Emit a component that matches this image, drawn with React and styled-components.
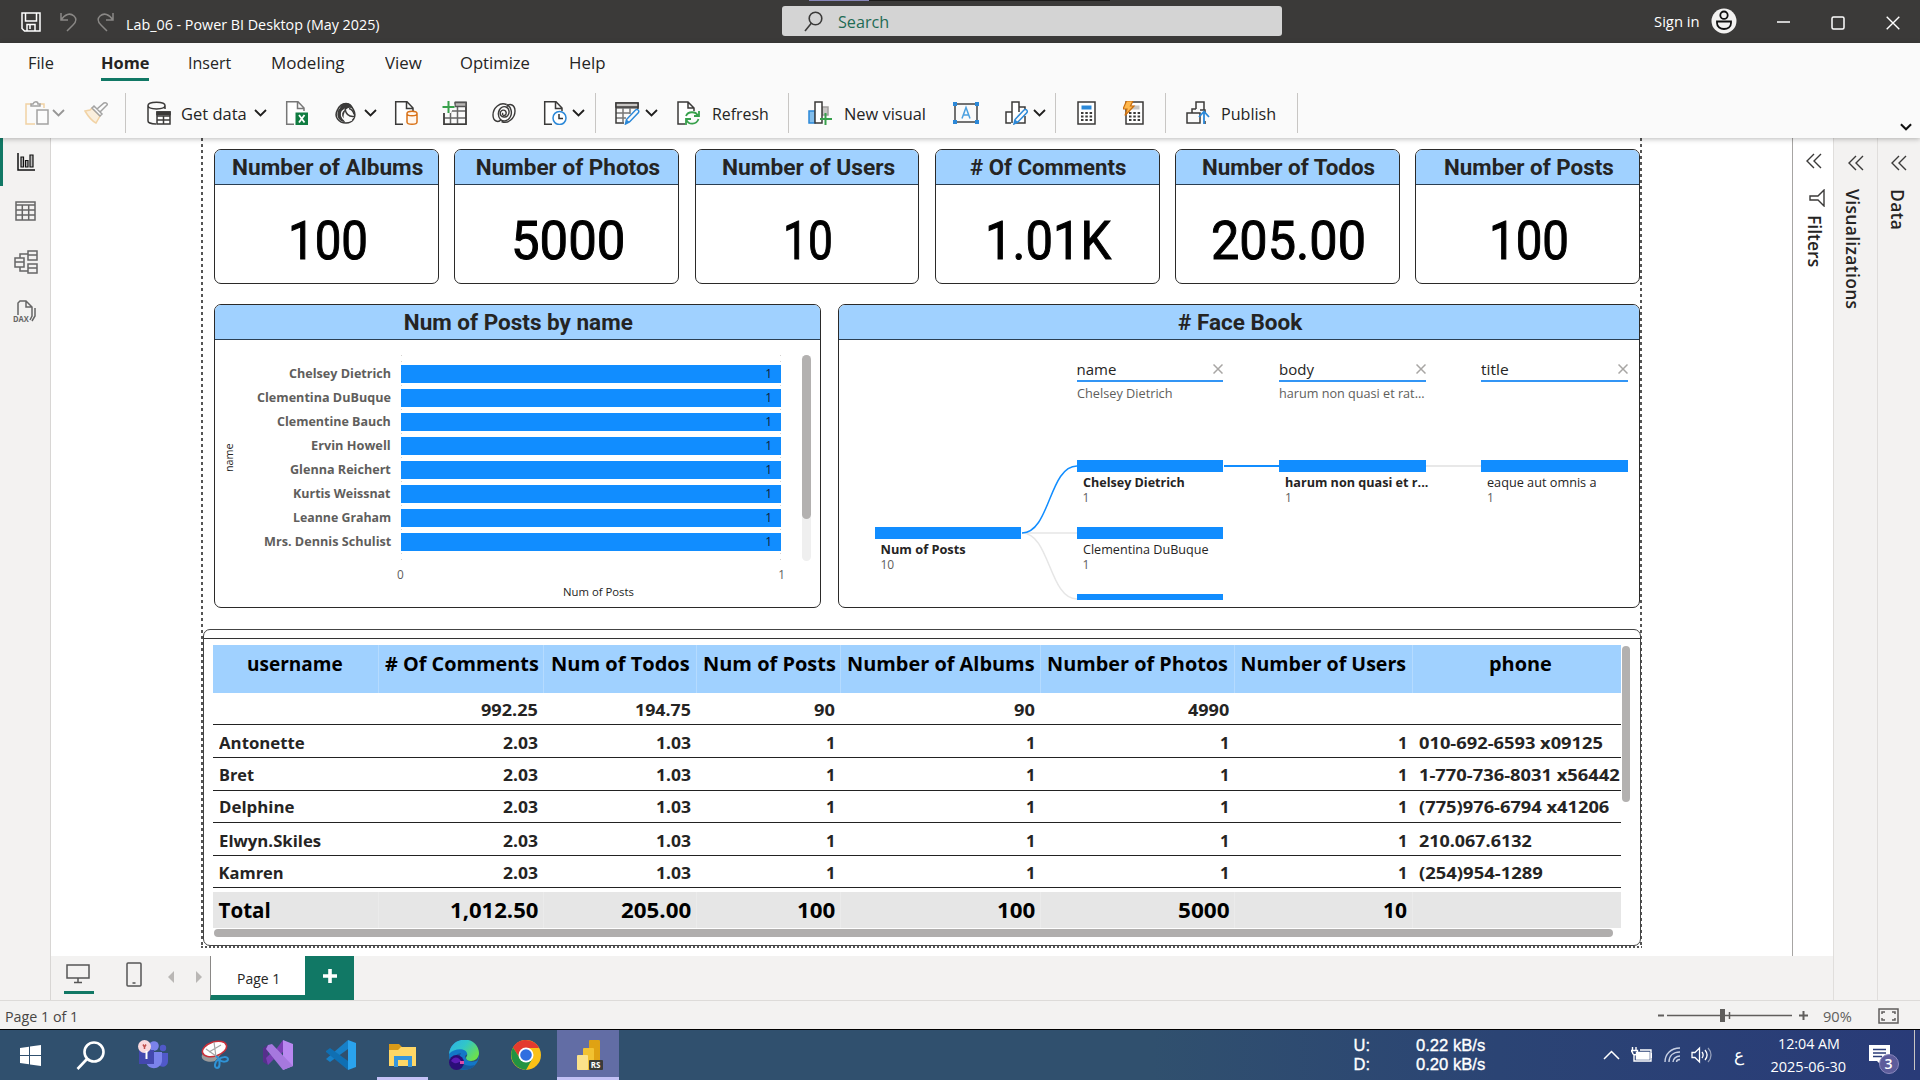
import React, { useLayoutEffect, useRef, useState } from "react";
import styled, { createGlobalStyle, css } from "styled-components";

const ui = '"Open Sans", "Noto Sans", sans-serif';
const din = 'Roboto, "Liberation Sans", sans-serif';
const blue = "#118dff";
const green = "#117865";

const Global = createGlobalStyle`
  *, *::before, *::after { box-sizing: border-box; }
  html, body { margin: 0; background: #fff; }
  body { font-family: ${ui}; color: #252423; overflow: hidden; }
  svg { display: block; flex: none; }
`;

/* ---------- text that keeps a fixed advance width ---------- */
const FitBox = styled.span`
  display: inline-block;
  flex: none;
  white-space: nowrap;
  text-align: left;
`;
const FitInner = styled.span`
  display: inline-block;
  transform-origin: 0 50%;
`;
function Fit({ w, children }) {
  const ref = useRef(null);
  const [scale, setScale] = useState(1);
  useLayoutEffect(() => {
    setScale(w / ref.current.offsetWidth);
  }, [w, children]);
  return (
    <FitBox style={{ width: w }}>
      <FitInner ref={ref} style={{ transform: `scaleX(${scale})` }}>{children}</FitInner>
    </FitBox>
  );
}

/* ---------- shell ---------- */
const Screen = styled.div`
  width: 1920px;
  height: 1080px;
  display: flex;
  flex-direction: column;
  background: #fff;
  overflow: hidden;
`;

const TitleBar = styled.header`
  height: 43px;
  flex: none;
  display: flex;
  align-items: flex-start;
  background: #3b3a39;
  color: #fff;
`;
const Slot = styled.div`
  flex: none;
  margin-left: ${(p) => p.$gap || 0}px;
  margin-top: ${(p) => p.$top || 0}px;
  width: ${(p) => (p.$w ? p.$w + "px" : "auto")};
`;
const TitleText = styled.div`
  margin: 13px 0 0 12px;
  width: 256px;
  flex: none;
  font-size: 14.6px;
  line-height: 22px;
`;
const SearchArea = styled.div`
  margin-left: 400px;
  width: 500px;
`;
const TopEdge = styled.div`
  height: 1px;
  margin: 0 172px 5px 27px;
  background: linear-gradient(90deg, #8785b8 0 60px, #1c1b1a 60px);
`;
const SearchBox = styled.div`
  height: 30px;
  display: flex;
  align-items: center;
  padding-left: 22px;
  gap: 15px;
  border-radius: 3px;
  background: #d4d4d4;
  color: #1f6b54;
  font-size: 16.5px;
`;
const SignIn = styled.div`
  margin: 11px 0 0 371.5px;
  width: 46px;
  font-size: 14.5px;
  line-height: 22px;
`;

const Ribbon = styled.section`
  height: 95px;
  flex: none;
  background: #fafafa;
  position: relative;
  z-index: 2;
  box-shadow: 0 1px 5px rgba(0, 0, 0, 0.28);
`;
const Tabs = styled.nav`
  display: flex;
  height: 38px;
  padding-left: 28px;
`;
const Tab = styled.div`
  margin-left: ${(p) => p.$gap}px;
  padding-top: 7px;
  font-size: 16.4px;
  line-height: 25px;
  font-weight: ${(p) => (p.$active ? 700 : 400)};
  border-bottom: 3px solid ${(p) => (p.$active ? green : "transparent")};
`;
const Tools = styled.div`
  display: flex;
  align-items: center;
  height: 40px;
  margin-top: 12px;
  font-size: 17px;
`;
const Tool = styled.div`
  margin-left: ${(p) => p.$gap}px;
  width: ${(p) => p.$w}px;
  flex: none;
  display: flex;
  opacity: ${(p) => (p.$dim ? 0.45 : 1)};
`;
const Rule = styled.div`
  margin-left: ${(p) => p.$gap}px;
  width: 1px;
  height: 40px;
  flex: none;
  background: #c8c6c4;
`;
const Collapse = styled.div`
  margin: 28px 0 0 602.5px;
`;

const Work = styled.main`
  flex: none;
  height: 862px;
  display: flex;
`;
const Rail = styled.aside`
  width: 51px;
  flex: none;
  background: #f3f2f1;
  border-right: 1px solid #d8d6d4;
`;
const RailItem = styled.div`
  height: ${(p) => p.$h || 51}px;
  display: flex;
  align-items: center;
  padding-left: ${(p) => p.$pad}px;
  ${(p) => p.$active && css`border-left: 3px solid ${green};`}
`;
const DaxIcon = styled.div`
  width: 26px;
  height: 26px;
  position: relative;
`;
const DaxText = styled.span`
  position: absolute;
  left: 0;
  bottom: 2px;
  font-size: 8px;
  line-height: 8px;
  font-weight: 700;
  color: #666;
  background: #f3f2f1;
`;

const Center = styled.div`
  flex: none;
  width: 1782px;
  display: flex;
  flex-direction: column;
`;
const CanvasRow = styled.div`
  height: 818px;
  display: flex;
`;
const Canvas = styled.div`
  width: 1742px;
  flex: none;
  padding-left: 150px;
  border-right: 1px solid #a7a5a3;
`;
const ReportPage = styled.div`
  width: 1441px;
  height: 810px;
  padding-top: 11px;
  background:
    repeating-linear-gradient(180deg, #555 0 3px, transparent 3px 6px) 0 0 / 2px 100% no-repeat,
    repeating-linear-gradient(180deg, #555 0 3px, transparent 3px 6px) 100% 0 / 2px 100% no-repeat,
    repeating-linear-gradient(90deg, #555 0 2px, transparent 2px 4px) 0 100% / 100% 2px no-repeat;
`;
const SidePanel = styled.aside`
  width: ${(p) => p.$w}px;
  flex: none;
  padding: ${(p) => p.$top}px 0 0 ${(p) => p.$pad}px;
  background: ${(p) => (p.$plain ? "#fff" : "#f3f2f1")};
  border-left: ${(p) => (p.$plain ? "0" : "1px solid #e0dedc")};
`;
const VerticalLabel = styled.div`
  margin: ${(p) => p.$gap}px 0 0 ${(p) => p.$left || -4}px;
  writing-mode: vertical-rl;
  font-size: 17.5px;
  line-height: 24px;
  font-weight: 600;
  letter-spacing: ${(p) => p.$ls || 0}px;
  white-space: nowrap;
`;

/* ---------- visuals ---------- */
const Cards = styled.div`
  display: flex;
  gap: 15.5px;
  padding-left: 13.3px;
`;
const Frame = styled.section`
  width: ${(p) => p.$w}px;
  height: ${(p) => p.$h}px;
  flex: none;
  border: 1.4px solid #2b2a29;
  border-radius: 7px;
  overflow: hidden;
  background: #fff;
`;
const FrameTitle = styled.h2`
  margin: 0;
  height: 35px;
  display: flex;
  justify-content: center;
  padding-left: 2px;
  background: #a0d1ff;
  border-bottom: 1px solid #2b3f52;
  font: 700 22.5px/34px ${din};
  color: #252423;
`;
const CardValue = styled.div`
  display: flex;
  justify-content: center;
  padding: 23px 0 0 2px;
  font: 400 54px/66px ${din};
  -webkit-text-stroke: 1px #000;
  color: #000;
`;
const Charts = styled.div`
  display: flex;
  gap: 17.5px;
  padding: 20px 0 0 13px;
`;

const BarBody = styled.div`
  display: flex;
  height: 268px;
`;
const YTitle = styled.div`
  width: 16px;
  margin: 101px 0 0 6px;
  writing-mode: vertical-rl;
  transform: rotate(180deg);
  height: 31px;
  font-size: 10.8px;
  line-height: 16px;
`;
const BarNames = styled.div`
  width: 151px;
  margin: 22px 10px 0 3px;
  display: flex;
  flex-direction: column;
  align-items: flex-end;
  font-size: 12.6px;
  line-height: 24px;
  font-weight: 700;
  color: #605e5c;
`;
const Plot = styled.div`
  width: 380px;
`;
const Bars = styled.div`
  height: 205px;
  margin-top: 15px;
  padding-top: 10px;
  display: flex;
  flex-direction: column;
  gap: 6px;
  background:
    repeating-linear-gradient(180deg, #d5d3d1 0 1px, transparent 1px 6px) 0 0 / 1px 100% no-repeat,
    repeating-linear-gradient(180deg, #d5d3d1 0 1px, transparent 1px 6px) 100% 0 / 1px 100% no-repeat;
`;
const Bar = styled.div`
  height: 18px;
  flex: none;
  padding-right: 9px;
  text-align: right;
  background: ${blue};
  font-size: 12px;
  line-height: 18px;
  color: #10203a;
`;
const Axis = styled.div`
  display: flex;
  justify-content: space-between;
  margin: 5px -4px 0;
  font-size: 11.8px;
  line-height: 18px;
  color: #605e5c;
`;
const XTitle = styled.div`
  text-align: center;
  padding-left: 15px;
  font-size: 11px;
  line-height: 18px;
`;
const Track = styled.div`
  width: 9px;
  height: 206px;
  margin: 15px 0 0 21px;
  border-radius: 5px;
  background: #efefef;
`;
const Thumb = styled.div`
  height: 164px;
  border-radius: 5px;
  background: #b3b1b0;
`;

const TreeBody = styled.div`
  position: relative;
  height: 268px;
`;
const Links = styled.svg`
  position: absolute;
  left: 0.5px;
  top: 0.5px;
`;
const Level = styled.div`
  position: absolute;
  left: ${(p) => p.$x}px;
  top: 17.5px;
  width: 146.5px;
`;
const LevelHead = styled.div`
  display: flex;
  justify-content: space-between;
  align-items: center;
  height: 24px;
  border-bottom: 2.5px solid #3295f5;
  font-size: 15px;
  line-height: 20px;
`;
const LevelValue = styled.div`
  padding-top: 3px;
  font-size: 12.6px;
  line-height: 18px;
  color: #605e5c;
`;
const Node = styled.div`
  position: absolute;
  left: ${(p) => p.$x}px;
  top: ${(p) => p.$y}px;
  width: 146.5px;
`;
const NodeBar = styled.div`
  height: ${(p) => p.$h || 12}px;
  background: ${blue};
`;
const NodeName = styled.div`
  padding: 1.5px 0 0 6px;
  font-size: 12.8px;
  line-height: 18px;
  font-weight: ${(p) => (p.$bold ? 700 : 400)};
  white-space: nowrap;
`;
const NodeCount = styled.div`
  padding-left: 6px;
  font-size: 12px;
  line-height: 13px;
  color: #605e5c;
`;

const TableFrame = styled.section`
  width: 1438px;
  height: 317px;
  margin: 21px 0 0 1.5px;
  border: 1.4px solid #444;
  border-radius: 7px;
  background: #fff;
`;
const TableGap = styled.div`
  height: 9px;
  border-bottom: 1.4px solid #333;
`;
const TableArea = styled.div`
  display: flex;
  padding: 5.5px 0 0 9px;
`;
const Grid = styled.div`
  width: 1408px;
  overflow: hidden;
`;
const GridRow = styled.div`
  display: grid;
  grid-template-columns: 166px 165px 153px 144px 200px 194px 178px 216px;
  width: 1416px;
  height: ${(p) => p.$h}px;
`;
const HeadRow = styled(GridRow)`
  background: #a0d1ff;
  font-size: 19.6px;
  line-height: 38px;
  font-weight: 700;
  color: #000;
`;
const DataRow = styled(GridRow)`
  border-bottom: 1.4px solid #222;
  font-size: 16.5px;
  line-height: 23px;
  padding-top: ${(p) => p.$pad}px;
  font-weight: 700;
`;
const TotalRow = styled(GridRow)`
  margin-top: 4px;
  background: #e6e6e6;
  font-size: 20.6px;
  line-height: 37px;
  font-weight: 700;
  color: #000;
`;
const Cell = styled.div`
  padding: 0 ${(p) => p.$right ?? 4.5}px 0 6px;
  text-align: ${(p) => p.$align};
  white-space: nowrap;
  border-right: 1px solid rgba(255, 255, 255, 0.22);
`;
const VThumb = styled.div`
  width: 8px;
  height: 156px;
  margin: 1px 0 0 1.5px;
  border-radius: 4px;
  background: #b3b1b0;
`;
const HThumb = styled.div`
  width: 1399px;
  height: 8px;
  margin: 1px 0 0 10px;
  border-radius: 4px;
  background: #b0aead;
`;

/* ---------- page tabs, status bar, taskbar ---------- */
const PageTabs = styled.footer`
  height: 44px;
  display: flex;
  background: #f3f2f1;
`;
const ViewMode = styled.div`
  width: 30px;
  height: 38px;
  margin-left: 13px;
  padding: 8px 0 0 2px;
  border-bottom: 3px solid ${green};
`;
const PageTab = styled.div`
  width: 95px;
  height: 44px;
  margin-left: 8px;
  padding: 11px 0 0 25.5px;
  background: #fff;
  border-left: 1px solid #8a8886;
  border-bottom: 5px solid ${green};
  font-size: 14.6px;
  line-height: 22px;
`;
const AddPage = styled.div`
  width: 49px;
  height: 44px;
  padding: 13px 0 0 17.5px;
  background: ${green};
`;
const Status = styled.footer`
  height: 29px;
  flex: none;
  display: flex;
  align-items: center;
  padding: 1px 0 0 5px;
  background: #f3f2f1;
  border-top: 1px solid #dddbd9;
  font-size: 14.8px;
  color: #484644;
`;
const ZoomSlider = styled.div`
  width: 167px;
  margin-left: 1577.5px;
  flex: none;
`;
const ZoomLabel = styled.div`
  width: 55px;
  display: flex;
  font-size: 14.6px;
  color: #605e5c;
`;
const Taskbar = styled.footer`
  height: 51px;
  flex: none;
  display: flex;
  border-top: 1.4px solid #000;
  background: linear-gradient(90deg, #30506e 0, #30506e 60%, #2b4474 78%, #293b78 100%);
  color: #fff;
`;
const TaskIcon = styled.div`
  width: ${(p) => p.$w || 61.5}px;
  height: 50px;
  flex: none;
  display: flex;
  align-items: center;
  justify-content: center;
  background: ${(p) => (p.$active ? "#626da5" : "transparent")};
  box-shadow: ${(p) => (p.$open ? "inset 0 -3px #c3c1f6" : "none")};
`;
const Gap = styled.div`
  width: ${(p) => p.$w}px;
  flex: none;
`;
const NetCol = styled.div`
  width: ${(p) => p.$w}px;
  margin-left: ${(p) => p.$gap}px;
  padding-top: 6px;
  font: 400 16.5px/19px "Liberation Sans", Arial, sans-serif;
  -webkit-text-stroke: 0.35px #fff;
`;
const Clock = styled.div`
  width: 92px;
  margin-left: 18.5px;
  padding-top: 2px;
  text-align: center;
  font-size: 14.5px;
  line-height: 23px;
`;
const ArabicKey = styled.div`
  margin: 11px 0 0 22.5px;
  width: 10px;
  font: 17px/28px "DejaVu Sans", sans-serif;
`;
const Notice = styled.div`
  position: relative;
  width: 32px;
  margin: 15px 0 0 14px;
`;
const Badge = styled.span`
  position: absolute;
  left: 10px;
  top: 9px;
  width: 20px;
  height: 20px;
  border-radius: 50%;
  border: 1px solid #8a88bd;
  background: #5d5c9b;
  font-size: 14px;
  line-height: 18px;
  font-weight: 600;
  text-align: center;
`;
const PbiIcon = styled.div`
  position: relative;
`;
const RsTag = styled.span`
  position: absolute;
  right: -3px;
  bottom: 0;
  width: 14px;
  height: 10px;
  background: #3b3a39;
  border-radius: 1px;
  font-size: 8px;
  line-height: 10px;
  font-weight: 700;
  text-align: center;
`;

/* ---------- icons ---------- */
const Svg = ({ w = 24, h = 24, vb, children, c = "#3b3a39", s = 1.5 }) => (
  <svg width={w} height={h} viewBox={vb || `0 0 ${w} ${h}`} fill="none" stroke={c} strokeWidth={s}>{children}</svg>
);
const Chev = ({ c = "#201f1e", w = 13 }) => <Svg w={w} h={8} vb="0 0 13 8" c={c} s={1.8}><path d="M1 1l5.500 5.500L12 1" /></Svg>;
const DoubleLeft = () => <Svg w={16} h={16} s={1.4}><path d="M8 1L1 8l7 7M15 1L8 8l7 7" /></Svg>;
const Pencil = ({ x = 0, y = 0 }) => (
  <g transform={`translate(${x} ${y})`}>
    <path d="M1 15l1-4.500L11 1c2-1.500 4 .5 3 2.500L5 13z" fill="#fafafa" stroke="#2b88d8" />
    <path d="M1 15l1-4.500 3 2.500z" fill="#2b88d8" stroke="none" />
  </g>
);
const Page = () => <path d="M9 23.300H1.700V.8H13l6 6.200v3M12.500 1v6.500h6" fill="#fff" />;

const Save = () => <Svg w={20} h={20} c="#fff"><path d="M1 1h18v18H3.500L1 16.500zM4.500 1v8h11V1M6 19v-6.500h8V19M9 13v4" /></Svg>;
const Undo = () => <Svg w={17} h={20} c="#8a8886"><path d="M1 1v7h7M1 8C5 2 10 .5 14 4c3 3 2 6-1 9l-6 6" /></Svg>;
const Redo = () => <Svg w={17} h={20} c="#8a8886"><path d="M16 1v7H9M16 8C12 2 7 .5 3 4 0 7 1 10 4 13l6 6" /></Svg>;
const SearchIcon = () => <Svg w={19} h={21} s={1.6}><circle cx="11.500" cy="7.500" r="6.300" /><path d="M7.500 12L1 20" /></Svg>;
const Avatar = () => <Svg w={26} h={26} c="#111" s={1.8}><circle cx="13" cy="13" r="12.500" fill="#f3f2f1" stroke="none" /><circle cx="13" cy="7.200" r="3.700" /><path d="M6 13.500h14v1.500c0 8-14 8-14 0z" /></Svg>;

const Paste = () => <Svg><path d="M6 3H1v20h9M15 3h4v4" stroke="#e8a33d" /><path d="M6 5V3h2c1-3 5-3 5 0h2v2z" /><path d="M12 9h11v14H12z" fill="#fff" /></Svg>;
const Brush = () => <Svg><path d="M1 10l5-1 2-2 8 8-4 7C8 20 4 15 1 10z" stroke="#e8a33d" fill="#fbe3bd" /><path d="M8 7l2-2 8 8-2 2zM13 8l7-6c2-1 4 1 3 2l-7 7" fill="#fff" /></Svg>;
const GetData = () => <Svg><path d="M9 23C4 23 1 21.500 1 20V4.500M18 4.500V8M1 4.500c0-4.500 17-4.500 17 0s-17 4.500-17 0z" /><path d="M10 11h13v12H10zM10 15h13M10 19h13M16.500 15v8" fill="#fff" /><path d="M10 11h13v2.500H10z" fill="#3b3a39" /></Svg>;
const Excel = () => (
  <Svg><g stroke="#777"><Page /></g><path d="M10.500 11.500H23V24H10.500z" fill="#107c41" stroke="none" /><path d="M14 14l5.500 7.500M19.500 14L14 21.500" stroke="#fff" strokeWidth="1.800" /></Svg>
);
const OneLake = () => (
  <Svg w={22} h={24} s={1.6}>
    <path d="M11 2.500c4.500 0 5.500 3 7.500 6.500 3.500 6.500-.5 13-7.500 13S-1.500 16 2.500 9C4 5.500 6.500 2.500 11 2.500z" fill="#fafafa" />
    <path d="M5 7C6 3 8.500 2 11 2c4 0 6 3 7 5.500C14 6 12 7 10.500 9.500 8 14 8 17 10 21 4 21 1 15 3 10c.5-1.500 1-2 2-3z" fill="#3b3a39" stroke="none" />
    <path d="M10 8C6.500 10 5 14 8 17.500c2 2.500 6 3 9 1.500M11 9c.5 4 3.500 7 8 7" stroke="#fafafa" strokeWidth="1.300" />
    <path d="M10 8c1 5 4 8 9 7.500M14 7.500c3 1 4.500 3 5 6" strokeWidth="1.400" />
  </Svg>
);
const Sql = () => <Svg><Page /><path d="M13 12.500v8.500c0 3 10 3 10 0v-8.500c0-3-10-3-10 0s10 3 10 0" fill="#fff7ef" stroke="#d9731a" /></Svg>;
const EnterData = () => <Svg w={26}><path d="M2 12v11.200h22V1.500H13M2 17h22M8.500 10v13M15.500 6v17M10 10h14" stroke="#666" /><path d="M2 12v11.200h22V1.500H13" /><path d="M13 1.500h11v4H13z" fill="#b8b6b4" stroke="#555" /><path d="M6.500 0v12M.5 6h12" stroke="#fafafa" strokeWidth="5" /><path d="M6.500 0v12M.5 6h12" stroke="#37a04b" strokeWidth="2" /></Svg>;
const Dataverse = () => (
  <Svg s={1.4}>
    <path d="M14.500 3.500C8 .5 1 7 1 14c0 6.500 5.500 8 8 4.500M9.500 20.500C16 23.500 23 17 23 10c0-6.500-5.500-8-8-4.500" />
    <path d="M14.500 3.500c4.500 2 6 8 4 12-2 4.500-7 5.500-10 3-3-3-3-9 1-12 3-2 7-.5 7.500 3.500.5 4-2.500 6.500-5 6" />
    <path d="M12 16c-3 0-4.500-2.500-3.500-5 1-2 3.500-2.500 5-1 1.500 2 .5 4.500-1.500 4.500-1.500 0-2-1.500-1-2.500" />
  </Svg>
);
const Recent = () => <Svg><Page /><circle cx="16.500" cy="17" r="6.500" fill="#fff" stroke="#2b88d8" /><path d="M16 13v4.500h4" stroke="#333" /></Svg>;
const Transform = () => <Svg w={26}><path d="M1 7h22M1 12h14M1 17h10M8 7v14M15 7v6" stroke="#777" /><path d="M9 22H1V2h22v6" /><path d="M1 2h22v4H1z" fill="#c8c6c4" /><Pencil x={9.500} y={8} /></Svg>;
const Refresh = () => <Svg><path d="M8 23H1V1h10l6 6v3M11 1v6h6" fill="#fff" /><path d="M9 15c2-5 10-5 12 0M22 10v5h-5M21.500 18c-2 6-10 6-12 1M9 24v-6h5" stroke="#37a04b" strokeWidth="1.800" /></Svg>;
const NewVisual = () => <Svg><path d="M1 10h6v12H1z" fill="#83beec" stroke="#2b88d8" /><path d="M14 6h6v8h-6z" fill="#c8c6c4" stroke="#a19f9d" /><path d="M7 1h7v21H7z" fill="#fff" /><path d="M17.500 12v12M12 18h12" stroke="#37a04b" strokeWidth="2" /></Svg>;
const TextBox = () => (
  <Svg w={26}><path d="M2 3h22v18H2z" stroke="#444" /><path d="M9 17.500l4-11 4 11M10.500 14h5" stroke="#4ba0e0" /><path d="M0 1h4v4H0zM22 1h4v4h-4zM0 19h4v4H0zM22 19h4v4h-4z" fill="#2b88d8" stroke="none" /></Svg>
);
const MoreVisuals = () => <Svg><path d="M6 22H1V11h6M7 22V1h7v10M14 6h6v3M20 15v7h-9" fill="#fff" /><Pencil x={8} y={8} /></Svg>;
const Calc = ({ bolt }) => (
  <Svg w={22}>
    <path d="M3 1h17v22H3z" fill="#fff" />
    <path d="M6.500 4.500h10v4h-10z" fill={bolt ? "#c8c6c4" : "#2b88d8"} stroke="none" />
    <path d="M6 12h2.500M10.300 12h2.500M14.600 12h2.500M6 15.500h2.500M10.300 15.500h2.500M14.600 15.500h2.500M6 19h2.500M10.300 19h2.500M14.600 19h2.500" strokeWidth="2.200" />
    {bolt && <path d="M3.500 0H10L7.500 5H11L2 14.500 4 8H0z" fill="#ffb84d" stroke="#ca6f10" strokeWidth="1.200" />}
  </Svg>
);
const Publish = () => <Svg><path d="M6 12V8h4M10 8V1h8v8M6 12h8v10H1V12zM14 9h5v3M19 20v3" /><path d="M18 23V11M13 16l5-5.500 5 5.500" stroke="#2b88d8" strokeWidth="1.800" /></Svg>;

const Windows = () => <Svg w={21} h={21} c="none"><path d="M0 3l9-1.300V10H0zM10 1.500L21 0v10H10zM0 11h9v8.300L0 18zM10 11h11v10l-11-1.500z" fill="#fff" /></Svg>;
const TaskSearch = () => <Svg w={29} h={29} c="#fff" s={2.600}><circle cx="18" cy="11" r="9.500" /><path d="M11 18L1.500 28" /></Svg>;
const Teams = () => (
  <Svg w={30} h={30} c="none"><circle cx="25" cy="8" r="3.200" fill="#5059c9" /><path d="M20 13h10v8c0 5-5 7-8 5z" fill="#5059c9" /><circle cx="16" cy="6" r="4.800" fill="#7b83eb" /><path d="M8 12h16v8c0 10-14 11-16 2z" fill="#7b83eb" /><path d="M1 10h15v14H1z" fill="#4348ae" /><circle cx="6.500" cy="6.500" r="6.500" fill="#f8d9de" /><path d="M8.500 11v8" stroke="#fff" strokeWidth="2" /><path d="M5 4.500l1.500 2.500L8 4.500M6.500 7v2" stroke="#c0504d" /></Svg>
);
const Snip = () => (
  <Svg w={30} h={30}><path d="M1 15c-2 6 8 8 13 6l9-10L4 11z" fill="#9b9b9b" stroke="none" /><ellipse cx="13.500" cy="9" rx="12.500" ry="7" transform="rotate(-18 13.500 9)" fill="#fff" stroke="#c8303a" strokeWidth="1.600" /><path d="M13 2l2 15M15 16L5 9M8 12l12-7" stroke="#a5a5a5" strokeWidth="1.200" /><path d="M15 16l4 4M18 19c-5 3-5 9-2 9 3 0 3-5 2-9zM18 19c3 4 9 3 9 0-1-3-6-2-9 0z" stroke="#2f93d6" strokeWidth="2" /></Svg>
);
const VisualStudio = () => <Svg w={30} h={30} c="none"><path d="M0 8l5-3v20l-5-3z" fill="#55308c" /><path d="M5 25l6-6-4-5-4 4z" fill="#7b3fb5" /><path d="M20 0l10 4v22l-10 4z" fill="#b987f0" /><path d="M20 0v12l-8 8-4-4z" fill="#7b3fb5" /><path d="M5 5l4-1 21 22-10 4L3 9z" fill="#a678de" /></Svg>;
const VsCode = () => <Svg w={30} h={30} c="none"><path d="M0 19L22 0v9L4 22z" fill="#1780c8" /><path d="M0 11l4-3 18 13v9L0 12z" fill="#0f6fb3" /><path d="M22 0l8 3v24l-8 3z" fill="#2aa3ee" /></Svg>;
const Explorer = () => <Svg w={28} h={24} c="none"><path d="M0 1h10l3 3h13v5H0z" fill="#d99a18" /><path d="M0 7h9l3-3h15v19H0z" fill="#ffd766" /><path d="M5 24V13h18v11h-4v-7H9v7z" fill="#3695dc" /></Svg>;
const Edge = () => (
  <svg width="30" height="30" viewBox="0 0 30 30">
    <defs><linearGradient id="edgeTop" x1="0" y1="0" x2="1" y2="0.600"><stop offset="0" stopColor="#2faee8" /><stop offset=".5" stopColor="#31c6c9" /><stop offset="1" stopColor="#6be04e" /></linearGradient></defs>
    <circle cx="15" cy="15" r="15" fill="#1377c8" /><path d="M16 16c1 6 8 7 13 4-1 1 1-5 1-5l-8-4z" fill="#30506e" /><path d="M0 14C2-5 29-5 30 13c0 5-4 8-8 8-5 0-6-3-4-5 2-8-12-9-18-2z" fill="url(#edgeTop)" /><path d="M12 13c-4 7 2 15 14 12-5 6-14 6-19 2s-3-13 5-14z" fill="#155a9e" /><circle cx="7.500" cy="22.500" r="7.500" fill="#2b0d78" /><path d="M2 21c4-6 8-3 11 1-4-1-5 4-11-1z" fill="#5a1cb5" /><path d="M11 21h4v3h-4z" fill="#d94ca8" />
  </svg>
);
const Chrome = () => (
  <Svg w={30} h={30} c="none"><circle cx="15" cy="15" r="15" fill="#fbc116" /><path d="M2 7.500C8-3 23-2 28 8H15L9 18.500z" fill="#e33b2e" /><path d="M2 7.500C-3 17 3 29 15 30l6.500-11.500H9z" fill="#229342" /><circle cx="15" cy="15" r="7.500" fill="#fff" /><circle cx="15" cy="15" r="5.800" fill="#2f6fe0" /></Svg>
);
const PowerBi = () => <Svg w={23} h={30} c="none"><rect x="12" y="0" width="11" height="30" rx="1" fill="#dfa213" /><rect x="6" y="8" width="11" height="22" rx="1" fill="#f2c231" /><rect x="0" y="15" width="11" height="15" rx="1" fill="#fbe28a" /></Svg>;

/* ---------- content ---------- */
const tabs = [["File", 26, 0], ["Home", 48, 47], ["Insert", 43, 39], ["Modeling", 73.5, 40], ["View", 37, 40], ["Optimize", 70, 38.5], ["Help", 36, 39]];
const cards = [["Number of Albums", 191, "100", 80], ["Number of Photos", 184, "5000", 114], ["Number of Users", 173, "10", 50], ["# Of Comments", 156, "1.01K", 126], ["Number of Todos", 173, "205.00", 155], ["Number of Posts", 170, "100", 80]];
const barNames = [["Chelsey Dietrich", 102], ["Clementina DuBuque", 134], ["Clementine Bauch", 114], ["Ervin Howell", 80], ["Glenna Reichert", 101], ["Kurtis Weissnat", 98], ["Leanne Graham", 98], ["Mrs. Dennis Schulist", 127.5]];
const headers = [["username", 96], ["# Of Comments", 154], ["Num of Todos", 139], ["Num of Posts", 132.5], ["Number of Albums", 188], ["Number of Photos", 181.5], ["Number of Users", 166], ["phone", 63]];
const row = (name, w, phone, pw, h, pad) => ({ cells: [[name, w], ["2.03", 35], ["1.03", 35], ["1", 9], ["1", 9], ["1", 9], ["1", 9], [phone, pw]], h, pad });
const rows = [
  { cells: [["", 0], ["992.25", 57], ["194.75", 56], ["90", 21], ["90", 21], ["4990", 41.5], ["", 0], ["", 0]], h: 32, pad: 4.5 },
  row("Antonette", 85.5, "010-692-6593 x09125", 184, 33, 6),
  row("Bret", 35.5, "1-770-736-8031 x56442", 201, 33, 5),
  row("Delphine", 75.5, "(775)976-6794 x41206", 190.5, 32, 4),
  row("Elwyn.Skiles", 102.5, "210.067.6132", 113, 33, 6),
  row("Kamren", 65, "(254)954-1289", 124, 32, 5),
];
const totals = [["Total", 52], ["1,012.50", 88], ["205.00", 70.5], ["100", 38], ["100", 38], ["5000", 51.5], ["10", 24.5], ["", 0]];
const align = (i) => (i === 0 || i === 7 ? "left" : "right");

const TreeNode = ({ x, y, name, w, count, bold, h }) => (
  <Node $x={x} $y={y}>
    <NodeBar $h={h} />
    {name && <NodeName $bold={bold}><Fit w={w}>{name}</Fit></NodeName>}
    {count && <NodeCount>{count}</NodeCount>}
  </Node>
);
const TreeLevel = ({ x, name, w, value, vw }) => (
  <Level $x={x}>
    <LevelHead><Fit w={w}>{name}</Fit><Svg w={10} h={10} c="#a8a6a4" s={1.5}><path d="M.5.5l9 9M9.500.5l-9 9" /></Svg></LevelHead>
    {value && <LevelValue><Fit w={vw}>{value}</Fit></LevelValue>}
  </Level>
);

export default function App() {
  return (
    <Screen>
      <Global />
      <TitleBar>
        <Slot $gap={20.5} $top={11.5}><Save /></Slot>
        <Slot $gap={19} $top={12}><Undo /></Slot>
        <Slot $gap={20.5} $top={12}><Redo /></Slot>
        <TitleText><Fit w={254}>Lab_06 - Power BI Desktop (May 2025)</Fit></TitleText>
        <SearchArea>
          <TopEdge />
          <SearchBox><SearchIcon /><Fit w={51}>Search</Fit></SearchBox>
        </SearchArea>
        <SignIn><Fit w={46}>Sign in</Fit></SignIn>
        <Slot $gap={11} $top={8}><Avatar /></Slot>
        <Slot $gap={40} $top={21}><Svg w={13} h={2} c="#fff"><path d="M0 1h13" /></Svg></Slot>
        <Slot $gap={41.5} $top={16}><Svg w={14} h={14} c="#fff"><rect x="1" y="1" width="12" height="12" rx="1.500" /></Svg></Slot>
        <Slot $gap={41} $top={16}><Svg w={14} h={14} c="#fff" s={1.4}><path d="M.7.7l12.600 12.600M13.300.7L.7 13.300" /></Svg></Slot>
      </TitleBar>

      <Ribbon>
        <Tabs>
          {tabs.map(([t, w, gap]) => <Tab key={t} $gap={gap} $active={t === "Home"}><Fit w={w}>{t}</Fit></Tab>)}
        </Tabs>
        <Tools>
          <Tool $gap={25} $w={24} $dim><Paste /></Tool>
          <Tool $gap={3} $w={13} $dim><Chev /></Tool>
          <Tool $gap={19} $w={24} $dim><Brush /></Tool>
          <Rule $gap={17} />
          <Tool $gap={21} $w={24}><GetData /></Tool>
          <Tool $gap={10} $w={66}><Fit w={66}>Get data</Fit></Tool>
          <Tool $gap={7} $w={13}><Chev /></Tool>
          <Tool $gap={18} $w={24}><Excel /></Tool>
          <Tool $gap={26} $w={22}><OneLake /></Tool>
          <Tool $gap={7} $w={13}><Chev /></Tool>
          <Tool $gap={17} $w={24}><Sql /></Tool>
          <Tool $gap={24} $w={26}><EnterData /></Tool>
          <Tool $gap={24} $w={24}><Dataverse /></Tool>
          <Tool $gap={27} $w={24}><Recent /></Tool>
          <Tool $gap={5} $w={13}><Chev /></Tool>
          <Rule $gap={10} />
          <Tool $gap={18.5} $w={26}><Transform /></Tool>
          <Tool $gap={4} $w={13}><Chev /></Tool>
          <Tool $gap={19} $w={24}><Refresh /></Tool>
          <Tool $gap={11} $w={57}><Fit w={57}>Refresh</Fit></Tool>
          <Rule $gap={19.5} />
          <Tool $gap={19} $w={24}><NewVisual /></Tool>
          <Tool $gap={11.5} $w={82}><Fit w={82}>New visual</Fit></Tool>
          <Tool $gap={27} $w={26}><TextBox /></Tool>
          <Tool $gap={26} $w={24}><MoreVisuals /></Tool>
          <Tool $gap={4} $w={13}><Chev /></Tool>
          <Rule $gap={9} />
          <Tool $gap={19} $w={22}><Calc /></Tool>
          <Tool $gap={26} $w={22}><Calc bolt /></Tool>
          <Rule $gap={20} />
          <Tool $gap={20} $w={24}><Publish /></Tool>
          <Tool $gap={11} $w={55}><Fit w={55}>Publish</Fit></Tool>
          <Rule $gap={21} />
          <Collapse><Svg w={12} h={8} vb="0 0 13 8" s={2.2} c="#111"><path d="M1 1l5.500 5.500L12 1" /></Svg></Collapse>
        </Tools>
      </Ribbon>

      <Work>
        <Rail>
          <RailItem $active $pad={14} $h={48}><Svg w={18} h={18} c="#111"><path d="M1 0v17h17" /><path d="M4 4h2.500v10H4zM8.500 7.500H11V14H8.500zM13 2h3v12h-3z" fill="#bbb" strokeWidth="1.200" /></Svg></RailItem>
          <RailItem $pad={15} $h={49}><Svg w={21} h={20} c="#666"><path d="M1 1h19v18H1zM1 4h19M1 9h19M1 14h19M7.300 4v15M13.700 4v15" /></Svg></RailItem>
          <RailItem $pad={14} $h={53}><Svg w={24} h={24} c="#666"><path d="M1 8h9v9H1zM1 12h9M14 1h9v9h-9zM14 5h9M14 14h9v9h-9zM14 18h9M6 8V4h8M6 17v4h8" /></Svg></RailItem>
          <RailItem $pad={13} $h={48}><DaxIcon><Svg w={24} h={24} c="#666"><path d="M5 16V4l2-2h6l6 6v9l-2 4M13 2v6h6M22 9v8l-3 5" /></Svg><DaxText><Fit w={16}>DAX</Fit></DaxText></DaxIcon></RailItem>
        </Rail>

        <Center>
          <CanvasRow>
            <Canvas>
              <ReportPage>
                <Cards>
                  {cards.map(([t, w, v, vw]) => (
                    <Frame key={t} $w={224.7} $h={135}>
                      <FrameTitle><Fit w={w}>{t}</Fit></FrameTitle>
                      <CardValue><Fit w={vw}>{v}</Fit></CardValue>
                    </Frame>
                  ))}
                </Cards>
                <Charts>
                  <Frame $w={606.5} $h={304}>
                    <FrameTitle><Fit w={229}>Num of Posts by name</Fit></FrameTitle>
                    <BarBody>
                      <YTitle>name</YTitle>
                      <BarNames>{barNames.map(([n, w]) => <Fit key={n} w={w}>{n}</Fit>)}</BarNames>
                      <Plot>
                        <Bars>{barNames.map(([n]) => <Bar key={n}>1</Bar>)}</Bars>
                        <Axis><span>0</span><span>1</span></Axis>
                        <XTitle><Fit w={71}>Num of Posts</Fit></XTitle>
                      </Plot>
                      <Track><Thumb /></Track>
                    </BarBody>
                  </Frame>
                  <Frame $w={802} $h={304}>
                    <FrameTitle><Fit w={124}># Face Book</Fit></FrameTitle>
                    <TreeBody>
                      <Links width="800" height="268" fill="none" strokeWidth="1.500">
                        <path d="M182 192h55M182 192c28 0 27 66 55 66" stroke="#e6e6e6" />
                        <path d="M384 125h60" stroke={blue} strokeWidth="1.800" />
                        <path d="M586 125h57" stroke="#e1e1e1" />
                        <path d="M182 192c28 0 27-67 55-67" stroke={blue} />
                      </Links>
                      <TreeLevel x={237.5} name="name" w={40} value="Chelsey Dietrich" vw={96} />
                      <TreeLevel x={440} name="body" w={35} value="harum non quasi et rat..." vw={145.5} />
                      <TreeLevel x={642} name="title" w={28} />
                      <TreeNode x={35.5} y={186.5} name="Num of Posts" w={85} count="10" bold />
                      <TreeNode x={237.5} y={119.5} name="Chelsey Dietrich" w={102} count="1" bold />
                      <TreeNode x={237.5} y={186.5} name="Clementina DuBuque" w={126} count="1" />
                      <TreeNode x={237.5} y={253.5} h={6} />
                      <TreeNode x={440} y={119.5} name="harum non quasi et r..." w={143} count="1" bold />
                      <TreeNode x={642} y={119.5} name="eaque aut omnis a" w={110} count="1" />
                    </TreeBody>
                  </Frame>
                </Charts>
                <TableFrame>
                  <TableGap />
                  <TableArea>
                    <Grid>
                      <HeadRow $h={48.5}>{headers.map(([t, w], i) => <Cell key={t} $right={6} $align={i === 0 || i === 7 ? "center" : "right"}><Fit w={w}>{t}</Fit></Cell>)}</HeadRow>
                      {rows.map((r, k) => (
                        <DataRow key={k} $h={r.h} $pad={r.pad}>{r.cells.map(([t, w], i) => <Cell key={i} $align={align(i)}>{t && <Fit w={w}>{t}</Fit>}</Cell>)}</DataRow>
                      ))}
                      <TotalRow $h={35.5}>{totals.map(([t, w], i) => <Cell key={i} $align={align(i)}>{t && <Fit w={w}>{t}</Fit>}</Cell>)}</TotalRow>
                    </Grid>
                    <VThumb />
                  </TableArea>
                  <HThumb />
                </TableFrame>
              </ReportPage>
            </Canvas>
            <SidePanel $plain $w={40} $top={15} $pad={12.5}>
              <DoubleLeft />
              <Slot $gap={3.5} $top={20}><Svg w={16} h={18} s={1.4}><path d="M15 1v16L9 11H1V7h8z" /></Svg></Slot>
              <VerticalLabel $gap={8} $left={-3}>Filters</VerticalLabel>
            </SidePanel>
          </CanvasRow>
          <PageTabs>
            <ViewMode><Svg w={24} h={20} c="#555"><path d="M1 1h22v13H1zM12 14v4M8 18.500h8" /></Svg></ViewMode>
            <Slot $gap={31.5} $top={6}><Svg w={16} h={25} c="#555"><rect x="1" y="1" width="14" height="23" rx="1" /><path d="M6.500 21h3" /></Svg></Slot>
            <Slot $gap={26} $top={15}><Svg w={6} h={12} c="none"><path d="M6 0v12L0 6z" fill="#b9b7b5" /></Svg></Slot>
            <Slot $gap={22.5} $top={15}><Svg w={6} h={12} c="none"><path d="M0 0v12l6-6z" fill="#b9b7b5" /></Svg></Slot>
            <PageTab><Fit w={43}>Page 1</Fit></PageTab>
            <AddPage><Svg w={14} h={14} c="#fff" s={3.6}><path d="M7 0v14M0 7h14" /></Svg></AddPage>
          </PageTabs>
        </Center>

        <SidePanel $w={44} $top={17} $pad={14}><DoubleLeft /><VerticalLabel $gap={18} $left={-7} $ls={0.32}>Visualizations</VerticalLabel></SidePanel>
        <SidePanel $w={43} $top={17} $pad={13}><DoubleLeft /><VerticalLabel $gap={18} $left={-5} $ls={0.3}>Data</VerticalLabel></SidePanel>
      </Work>

      <Status>
        <Fit w={73.5}>Page 1 of 1</Fit>
        <ZoomSlider>
          <Svg w={155} h={20} c="#605e5c"><path d="M2 9.500h6" strokeWidth="2" /><path d="M11 9.500h125M73.500 6v7" /><path d="M143 9.500h9M147.500 5v9" strokeWidth="2" /><path d="M64 3h5v13h-5z" fill="#605e5c" stroke="none" /></Svg>
        </ZoomSlider>
        <ZoomLabel><Fit w={29}>90%</Fit></ZoomLabel>
        <Svg w={21} h={16} c="#605e5c"><path d="M1 1h19v14H1zM4 6V4h3M14 4h3v2M17 10v2h-3M7 12H4v-2" /></Svg>
      </Status>

      <Taskbar>
        <TaskIcon $w={60}><Windows /></TaskIcon>
        <TaskIcon $w={60}><TaskSearch /></TaskIcon>
        <TaskIcon $w={66}><Teams /></TaskIcon>
        <TaskIcon $w={60.5}><Snip /></TaskIcon>
        <TaskIcon $w={63.5}><VisualStudio /></TaskIcon>
        <TaskIcon $w={61}><VsCode /></TaskIcon>
        <Gap $w={6} />
        <TaskIcon $w={51} $open><Explorer /></TaskIcon>
        <Gap $w={5} />
        <TaskIcon $w={62}><Edge /></TaskIcon>
        <TaskIcon $w={62}><Chrome /></TaskIcon>
        <TaskIcon $w={62} $active $open><PbiIcon><PowerBi /><RsTag>RS</RsTag></PbiIcon></TaskIcon>
        <NetCol $gap={734.5} $w={20}><div>U:</div><div>D:</div></NetCol>
        <NetCol $gap={42.5} $w={72}><div><Fit w={69.5}>0.22 kB/s</Fit></div><div><Fit w={69.5}>0.20 kB/s</Fit></div></NetCol>
        <Slot $gap={114.5} $top={20}><Svg w={17} h={10} c="#fff"><path d="M1 9l7.500-7.500L16 9" /></Svg></Slot>
        <Slot $gap={11} $top={17}><Svg w={21} h={16} c="#fff" s={1.4}><path d="M1.500 0v3M5 0v3M0 3.500h6.500v2c0 3-5 3-5 0zM3 8v6h17V3H9" /><path d="M5.500 5.500h12.500v6.500H5.500z" fill="#fff" /><path d="M20.500 6v5" /></Svg></Slot>
        <Slot $gap={12} $top={17}><Svg w={17} h={16} c="#c8d0e4" s={1.4}><path d="M1 15C1 7 7 1 16 1M5 15C5 9 9 5 16 5M9 15c0-3 3-6 7-6M12.500 15c0-1 1-2.500 3.500-2.500" /></Svg></Slot>
        <Slot $gap={10} $top={16}><Svg w={21} h={18} c="#fff" s={1.3}><path d="M1 6.500h3L8.500 2v14L4 11.500H1zM11 6c1.500 2 1.500 4 0 6M14 4c2.500 3 2.500 7 0 10" /><path d="M17 2c4 4 4 10 0 14" opacity=".5" /></Svg></Slot>
        <ArabicKey>ع</ArabicKey>
        <Clock><Fit w={62}>12:04 AM</Fit><br /><Fit w={76}>2025-06-30</Fit></Clock>
        <Notice><Svg w={21} h={20} c="none"><path d="M0 0h21v16h-9v4l-4-4H0z" fill="#fff" /><path d="M4 4.500h13M4 8h13M4 11.500h9" stroke="#2b3d78" strokeWidth="1.400" /></Svg><Badge>3</Badge></Notice>
        <Rule $gap={13} />
      </Taskbar>
    </Screen>
  );
}
